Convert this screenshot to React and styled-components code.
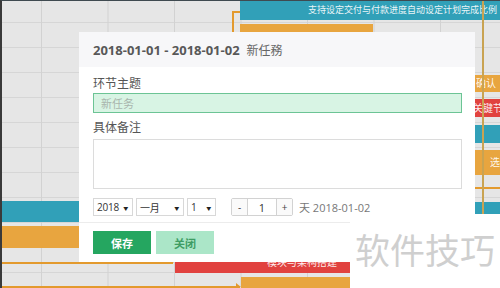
import React from 'react'
import styled, { createGlobalStyle } from 'styled-components'

const GlobalStyle = createGlobalStyle`
  html, body {
    margin: 0;
    padding: 0;
    background: #fff;
  }
  body {
    font-family: "Open Sans", "Noto Sans CJK SC", sans-serif;
  }
`

const tones = {
  teal: '#31a0b8',
  orange: '#e8a53f',
  red: '#e1423f',
}

// gantt bars: their place on the chart is the content itself
const bars = [
  { x: 240, y: 0, w: 260, h: 20, tone: 'teal', text: '支持设定交付与付款进度自动设定计划完成比例', align: 'right', size: 9 },
  { x: 240, y: 24, w: 133, h: 8, tone: 'orange' },
  { x: 400, y: 75, w: 100, h: 17, tone: 'orange', text: '确认', indent: 76 },
  { x: 400, y: 99, w: 100, h: 18, tone: 'red', text: '关键节点', indent: 73 },
  { x: 400, y: 125, w: 100, h: 18, tone: 'teal' },
  { x: 400, y: 150, w: 100, h: 25, tone: 'orange', text: '选择', indent: 90 },
  { x: 400, y: 202, w: 100, h: 14, tone: 'teal' },
  { x: 0, y: 201, w: 120, h: 21, tone: 'teal' },
  { x: 0, y: 226, w: 120, h: 22, tone: 'orange' },
  { x: 175, y: 251, w: 175, h: 22, tone: 'red', text: '模块与架构搭建', align: 'right', pad: 13 },
  { x: 241, y: 277, w: 260, h: 14, tone: 'orange' },
]

const links = [
  { x: 232, y: 11, w: 2, h: 24 },
  { x: 232, y: 11, w: 8, h: 2 },
  { x: 440, y: 187, w: 60, h: 2 },
  { x: 0, y: 262, w: 173, h: 2, arrow: true },
  { x: 0, y: 286, w: 240, h: 2, arrow: true },
]

function Select({ value, width }) {
  return (
    <SelectBox $w={width}>
      <span>{value}</span>
      <Caret>▼</Caret>
    </SelectBox>
  )
}

function App() {
  return (
    <>
      <GlobalStyle />
      <Canvas>
        {bars.map((b, i) => (
          <Bar
            key={i}
            $x={b.x}
            $y={b.y}
            $w={b.w}
            $h={b.h}
            $tone={b.tone}
            $align={b.align}
            $indent={b.indent}
            $pad={b.pad}
            $size={b.size}
          >
            {b.text}
          </Bar>
        ))}
        {links.map((l, i) => (
          <Link key={i} $x={l.x} $y={l.y} $w={l.w} $h={l.h} $arrow={l.arrow} />
        ))}
        <TodayLine />

        <Modal>
          <Header>
            <Range>2018-01-01 - 2018-01-02</Range>
            <Title>新任務</Title>
          </Header>
          <Body>
            <Label>环节主题</Label>
            <TitleInput placeholder="新任务" />
            <Label $gap>具体备注</Label>
            <Note />
            <DateRow>
              <Select value="2018" width={40} />
              <Select value="一月" width={48} />
              <Select value="1" width={29} />
              <Spinner>
                <StepBtn>-</StepBtn>
                <StepValue>1</StepValue>
                <StepBtn>+</StepBtn>
              </Spinner>
              <EndText>天 2018-01-02</EndText>
            </DateRow>
          </Body>
          <Footer>
            <Button $primary>保存</Button>
            <Button>关闭</Button>
          </Footer>
        </Modal>

        <Watermark>软件技巧</Watermark>
      </Canvas>
    </>
  )
}

export default App

const Canvas = styled.div`
  position: relative;
  width: 500px;
  height: 288px;
  overflow: hidden;
  background-color: #e6e6e6;
  background-image:
    linear-gradient(to right, #d2d2d2 1px, transparent 1px),
    linear-gradient(to bottom, #d6d6d6 1px, transparent 1px);
  background-size: 66.5px 25px;
  background-position: 41px 22px;

  &::after {
    content: '';
    position: absolute;
    inset: 0;
    border-left: 2px solid #3a3a3a;
    border-top: 1px solid #3f4a50;
    pointer-events: none;
    z-index: 20;
  }
`

const Bar = styled.div`
  position: absolute;
  left: ${p => p.$x}px;
  top: ${p => p.$y}px;
  width: ${p => p.$w}px;
  height: ${p => p.$h}px;
  background: ${p => tones[p.$tone]};
  color: rgba(255, 255, 255, 0.92);
  font-size: ${p => p.$size || 10}px;
  line-height: ${p => p.$h}px;
  white-space: nowrap;
  overflow: hidden;
  box-sizing: border-box;
  text-align: ${p => p.$align || 'left'};
  padding-left: ${p => p.$indent || 0}px;
  padding-right: ${p => p.$pad ?? 3}px;
  z-index: 1;
`

const Link = styled.div`
  position: absolute;
  left: ${p => p.$x}px;
  top: ${p => p.$y}px;
  width: ${p => p.$w}px;
  height: ${p => p.$h}px;
  background: #e39a2e;
  z-index: 2;

  &::after {
    content: ${p => (p.$arrow ? "''" : 'none')};
    position: absolute;
    right: -1px;
    bottom: 1px;
    border-left: 5px solid #e39a2e;
    border-top: 4px solid transparent;
  }
`

const TodayLine = styled.div`
  position: absolute;
  left: 482px;
  top: 0;
  width: 2px;
  height: 100%;
  background: #c9a352;
  z-index: 3;
`

const Modal = styled.div`
  position: absolute;
  left: 79px;
  top: 32px;
  width: 396px;
  background: #fff;
  z-index: 5;
  display: flex;
  flex-direction: column;
`

const Header = styled.div`
  height: 35px;
  background: #f7f7f9;
  display: flex;
  align-items: center;
  gap: 7px;
  padding: 0 14px;
`

const Range = styled.span`
  font-size: 13px;
  font-weight: 700;
  color: #585858;
`

const Title = styled.span`
  font-size: 12px;
  color: #666;
`

const Body = styled.div`
  display: flex;
  flex-direction: column;
  padding: 8px 13px 6px 14px;
`

const Label = styled.div`
  font-size: 12px;
  line-height: 18px;
  color: #555;
  margin-top: ${p => (p.$gap ? 6 : 0)}px;
`

const TitleInput = styled.input`
  box-sizing: border-box;
  width: 100%;
  height: 20px;
  margin: 0;
  padding: 0 7px;
  border: 1px solid #6cc495;
  background: #d8f4e4;
  font-family: inherit;
  font-size: 11px;
  outline: none;

  &::placeholder {
    color: #a9b5ad;
  }
`

const Note = styled.div`
  box-sizing: border-box;
  height: 50px;
  margin-top: 2px;
  border: 1px solid #dcdcdc;
  background: #fff;
`

const DateRow = styled.div`
  display: flex;
  align-items: center;
  gap: 3px;
  margin-top: 9px;
  height: 18px;
`

const SelectBox = styled.div`
  box-sizing: border-box;
  flex: 0 0 ${p => p.$w}px;
  height: 18px;
  border: 1px solid #d8d8d8;
  display: flex;
  align-items: center;
  justify-content: space-between;
  padding: 0 4px 0 3px;
  font-size: 10px;
  letter-spacing: -0.2px;
  color: #333;
`

const Caret = styled.span`
  font-size: 5px;
  color: #222;
`

const Spinner = styled.div`
  display: flex;
  height: 18px;
  margin-left: 12px;
  border: 1px solid #d2d2d2;
  border-radius: 2px;
  box-sizing: border-box;
`

const StepBtn = styled.div`
  width: 15px;
  display: flex;
  align-items: center;
  justify-content: center;
  font-size: 10px;
  color: #444;
  background: #fafafa;
`

const StepValue = styled.div`
  width: 28px;
  display: flex;
  align-items: center;
  justify-content: center;
  font-size: 11px;
  color: #333;
  border-left: 1px solid #d2d2d2;
  border-right: 1px solid #d2d2d2;
  background: #fff;
`

const EndText = styled.span`
  margin-left: 3px;
  font-size: 11px;
  color: #777;
`

const Footer = styled.div`
  display: flex;
  gap: 5px;
  padding: 8px 14px;
  border-top: 1px solid #ececec;
`

const Button = styled.div`
  width: 58px;
  height: 23px;
  display: flex;
  align-items: center;
  justify-content: center;
  font-size: 11px;
  font-weight: 700;
  background: ${p => (p.$primary ? '#25a660' : '#abe6c8')};
  color: ${p => (p.$primary ? '#fff' : '#3e9d64')};
`

const Watermark = styled.div`
  position: absolute;
  right: 0;
  bottom: 0;
  width: 150px;
  height: 74px;
  background: #fff;
  z-index: 10;
  display: flex;
  align-items: center;
  justify-content: center;
  padding-bottom: 6px;
  box-sizing: border-box;
  font-family: "Noto Sans CJK SC", sans-serif;
  font-size: 35px;
  color: #cfcfcf;
  letter-spacing: 0;
`
